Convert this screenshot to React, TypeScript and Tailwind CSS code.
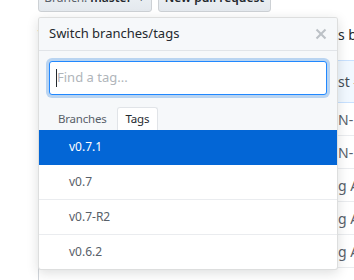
import React from "react";

const rowsBg = [
  { name: "src", msg: "N-142 update build" },
  { name: "docs", msg: "N-139 docs tweak" },
  { name: "test", msg: "g API tests" },
  { name: "README.md", msg: "g API usage" },
  { name: "LICENSE", msg: "g Apache license" },
  { name: "setup.py", msg: "g A" },
];

const tags = ["v0.7.1", "v0.7", "v0.7-R2", "v0.6.2"];

export default function App() {
  return (
    <div
      className="relative w-[354px] h-[280px] overflow-hidden bg-white text-[#24292e]"
      style={{ fontFamily: '"Noto Sans", "Open Sans", sans-serif' }}
    >
      {/* background page */}
      <div className="pl-[38px] w-[560px]">
        <div className="flex gap-[6px] mt-[-16px] h-[28px]">
          <div className="w-[114px] h-[28px] flex items-center justify-center gap-[3px] rounded-[3px] border border-[#cdd1d5] bg-gradient-to-b from-[#eff3f6] to-[#e4e9ee] text-[12px]">
            <span className="text-[#586069]">Branch:</span>
            <span className="font-semibold">master</span>
            <span className="text-[9px] ml-[2px]">▼</span>
          </div>
          <div className="w-[113px] h-[28px] flex items-center justify-center rounded-[3px] border border-[#cdd1d5] bg-gradient-to-b from-[#eff3f6] to-[#e4e9ee] text-[12px] font-semibold">
            New pull request
          </div>
        </div>
        <div className="h-[34px] flex items-end pb-[1px] text-[14px]">
          <span className="w-[300px] shrink-0">This branch is 4 commits ahead, 2 commit</span>
          <span>s behind master.</span>
        </div>
        <div className="h-[14px]" />
        <div className="h-[43px] flex items-center border border-[#c8e1ff] bg-[#f1f8ff] text-[14px] text-[#586069]">
          <span className="w-[299px] shrink-0 pl-[10px]">Latest commit by maintainer</span>
          <span className="text-[#444d56]">st #218</span>
        </div>
        <div className="border-l border-[#d1d5da]">
          {rowsBg.map((r) => (
            <div
              key={r.name}
              className="h-[33px] flex items-center border-b border-[#eaecef] text-[14px]"
            >
              <span className="w-[299px] shrink-0 pl-[10px] text-[#0366d6]">{r.name}</span>
              <span className="text-[#586069]">{r.msg}</span>
            </div>
          ))}
        </div>
      </div>

      {/* dropdown */}
      <div className="absolute left-[38px] top-[17px] w-[300px] h-[253px] flex flex-col overflow-hidden rounded-[3px] border border-[rgba(27,31,35,0.15)] bg-white shadow-[0_3px_12px_rgba(27,31,35,0.15)]">
        <div className="h-[33px] shrink-0 flex items-center justify-between pl-[10px] pr-[10px] bg-[#f6f8fa] border-b border-[#e1e4e8]">
          <span className="text-[13px] text-[#24292e]">Switch branches/tags</span>
          <svg width="12" height="16" viewBox="0 0 12 16" fill="#bcc1c6">
            <path d="M7.48 8l3.75 3.75-1.48 1.48L6 9.48l-3.75 3.75-1.48-1.48L4.52 8 .77 4.25l1.48-1.48L6 6.52l3.75-3.75 1.48 1.48L7.48 8z" />
          </svg>
        </div>
        <div className="shrink-0 p-[10px] bg-[#f6f8fa]">
          <div className="h-[34px] flex items-center px-[6px] rounded-[3px] border border-[#2188ff] bg-white shadow-[0_0_0_3px_rgba(3,102,214,0.25)]">
            <span className="w-px h-[18px] bg-[#24292e]" />
            <span className="text-[13px] text-[#b0b5ba]">Find a tag...</span>
          </div>
        </div>
        <div className="h-[25px] shrink-0 flex items-end gap-[2px] pl-[11px] bg-[#f6f8fa]">
          <div className="h-[23px] px-[8px] flex items-center text-[11.5px] tracking-[-0.2px] text-[#586069]">Branches</div>
          <div className="h-[23px] px-[8px] flex items-center text-[11.5px] tracking-[-0.2px] text-[#24292e] bg-white border border-b-0 border-[#e1e4e8] rounded-t-[3px]">
            Tags
          </div>
        </div>
        <div className="flex-1 flex flex-col">
          {tags.map((t, i) => (
            <div
              key={t}
              className={
                i === 0
                  ? "h-[35px] shrink-0 flex items-center pl-[30px] text-[12px] bg-[#0366d6] text-white border-b border-[#0366d6]"
                  : i === tags.length - 1
                  ? "flex-1 flex items-center pl-[30px] text-[12px] text-[#586069]"
                  : "h-[35px] shrink-0 flex items-center pl-[30px] text-[12px] text-[#586069] border-b border-[#eaecef]"
              }
            >
              {t}
            </div>
          ))}
        </div>
      </div>
    </div>
  );
}
